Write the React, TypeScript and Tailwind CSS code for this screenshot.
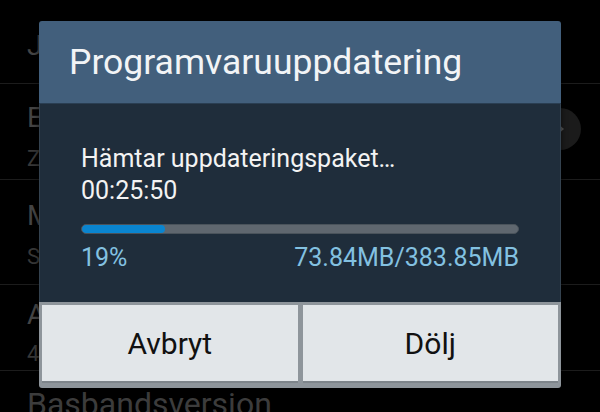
import React from "react";

const rows = [
  { title: "Juridisk information", sub: "" },
  { title: "Enhetsnamn", sub: "Zara", edit: true },
  { title: "Modellnummer", sub: "SM-N9005" },
  { title: "Android-version", sub: "4.4.2" },
];

export default function App() {
  const percent = 19;

  return (
    <div
      className="relative w-[600px] h-[412px] overflow-hidden bg-black"
      style={{ fontFamily: "Roboto, 'Noto Sans', sans-serif" }}
    >
      {/* --- SETTINGS LIST (dimmed behind dialog) --- */}
      <div className="flex flex-col">
        <div className="h-[84px] border-b border-[#1c1c1c] px-[27px] pt-[32px]">
          <p className="text-[28px] leading-none text-[#444]">{rows[0].title}</p>
        </div>
        <div className="h-[96px] border-b border-[#1c1c1c] px-[27px] pt-[20px] flex justify-between">
          <div>
            <p className="text-[28px] leading-none text-[#444]">{rows[1].title}</p>
            <p className="text-[22px] leading-none text-[#383838] mt-[16px]">{rows[1].sub}</p>
          </div>
          <div className="w-[42px] h-[42px] rounded-full bg-[#1b1b1b] flex items-center justify-center mt-[4px] -mr-[8px]">
            <div className="w-0 h-0 border-y-[6px] border-y-transparent border-l-[7px] border-l-[#555]" />
          </div>
        </div>
        <div className="h-[105px] border-b border-[#1c1c1c] px-[27px] pt-[22px]">
          <p className="text-[28px] leading-none text-[#444]">{rows[2].title}</p>
          <p className="text-[22px] leading-none text-[#383838] mt-[16px]">{rows[2].sub}</p>
        </div>
        <div className="h-[86px] border-b border-[#1c1c1c] px-[27px] pt-[16px]">
          <p className="text-[28px] leading-none text-[#444]">{rows[3].title}</p>
          <p className="text-[22px] leading-none text-[#383838] mt-[14px]">{rows[3].sub}</p>
        </div>
        <div className="px-[27px] pt-[17px]">
          <p className="text-[32px] leading-none text-[#3c3c3c]">Basbandsversion</p>
        </div>
      </div>

      {/* --- DIALOG --- */}
      <div className="absolute left-[39px] top-[21px] w-[522px] rounded-[3px] overflow-hidden shadow-[0_0_6px_rgba(0,0,0,0.6)]">
        <div className="h-[83px] bg-[#425f7c] border-b border-[#2a3e52] flex items-center px-[30px]">
          <h1 className="text-[35.5px] text-[#f2f4f6] leading-none mt-[2px]">Programvaruuppdatering</h1>
        </div>

        <div className="h-[198px] bg-[#1f2d3b] px-[41px] pt-[39px] border-x border-[#34424f]">
          <p className="text-[25px] leading-[32px] text-[#f3f3f3]">Hämtar uppdateringspaket…</p>
          <p className="text-[25px] leading-[32px] text-[#f3f3f3]">00:25:50</p>

          <div className="mt-[17px] h-[10px] rounded-full bg-[#5f676f] border border-[#4a535b] overflow-hidden">
            <div className="h-full rounded-full bg-[#0a85d0]" style={{ width: `${percent}%` }} />
          </div>

          <div className="flex justify-between mt-[11px] text-[25px] leading-none text-[#83c1e1]">
            <span>{percent}%</span>
            <span>73.84MB/383.85MB</span>
          </div>
        </div>

        <div className="bg-[#8e959b] px-[3px] pt-[3px] pb-[5px] grid grid-cols-2 gap-[5px]">
          <button className="h-[78px] bg-[#e2e6e9] border-b-2 border-[#7e858b] text-[30px] text-[#111]">
            Avbryt
          </button>
          <button className="h-[78px] bg-[#e2e6e9] border-b-2 border-[#7e858b] text-[30px] text-[#111]">
            Dölj
          </button>
        </div>
      </div>
    </div>
  );
}
